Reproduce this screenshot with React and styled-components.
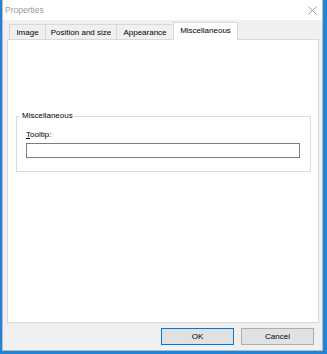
import React from 'react';
import styled, { createGlobalStyle } from 'styled-components';

const GlobalStyle = createGlobalStyle`
  html, body {
    margin: 0;
    padding: 0;
  }
  body {
    width: 327px;
    height: 354px;
    overflow: hidden;
    background: #1e85da;
    font-family: "Liberation Sans", Arial, sans-serif;
    font-size: 8px;
    color: #000;
  }
`;

const Window = styled.div`
  box-sizing: border-box;
  margin-left: 2px;
  width: 321px;
  height: 351px;
  border: 1px solid #bcbcbc;
  border-top: none;
  background: #f0f0f0;
  display: flex;
  flex-direction: column;
`;

const TitleBar = styled.div`
  height: 20px;
  flex: none;
  background: #fff;
  display: flex;
  align-items: center;
  justify-content: space-between;
  padding: 0 5px 0 2px;
  color: #9a9a9a;
  font-size: 8.5px;
`;

const Body = styled.div`
  flex: 1;
  display: flex;
  flex-direction: column;
  padding: 2px 3px 0 4px;
`;

const TabStrip = styled.div`
  height: 17px;
  flex: none;
  display: flex;
  align-items: flex-end;
  padding-left: 2px;
  position: relative;
  z-index: 1;
`;

const Tab = styled.div`
  box-sizing: border-box;
  width: ${(p) => p.$w}px;
  height: ${(p) => (p.$active ? 18 : 15)}px;
  margin-bottom: ${(p) => (p.$active ? -1 : 0)}px;
  margin-left: ${(p) => (p.$first ? 0 : -1)}px;
  border: 1px solid #d9d9d9;
  border-bottom: none;
  background: ${(p) => (p.$active ? '#fff' : '#f0f0f0')};
  display: flex;
  justify-content: center;
  align-items: flex-start;
  padding-top: ${(p) => (p.$active ? 3 : 3)}px;
  line-height: 10px;
  white-space: nowrap;
  position: relative;
  z-index: ${(p) => (p.$active ? 2 : 1)};
`;

const Panel = styled.div`
  box-sizing: border-box;
  flex: 1;
  background: #fff;
  border: 1px solid #d9d9d9;
  padding: 71px 7px 0 8px;
`;

const Group = styled.fieldset`
  margin: 0;
  border: 1px solid #dcdcdc;
  padding: 9px 10px 13px 9px;
  display: flex;
  flex-direction: column;
  gap: 3px;
`;

const Legend = styled.legend`
  padding: 0 2px;
  margin-left: -6px;
  line-height: 10px;
`;

const FieldLabel = styled.label`
  line-height: 10px;
`;

const TextBox = styled.input`
  box-sizing: border-box;
  width: 100%;
  height: 15px;
  margin: 0;
  border: 1px solid #7d7d7d;
  background: #fff;
  outline: none;
`;

const Footer = styled.div`
  flex: none;
  display: flex;
  justify-content: flex-end;
  gap: 7px;
  padding: 5px 5px 5px 0;
`;

const Button = styled.button`
  box-sizing: border-box;
  width: 73px;
  height: 17px;
  margin: 0;
  padding: 0;
  background: #e1e1e1;
  border: 1px solid ${(p) => (p.$default ? '#0078d7' : '#adadad')};
  font-family: inherit;
  font-size: 8px;
  color: #000;
`;

const tabs = [
  { label: 'Image', w: 37 },
  { label: 'Position and size', w: 72 },
  { label: 'Appearance', w: 58 },
  { label: 'Miscellaneous', w: 65, active: true },
];

export default function App() {
  return (
    <>
      <GlobalStyle />
      <Window>
        <TitleBar>
          <span>Properties</span>
          <svg width="9" height="9" viewBox="0 0 9 9">
            <path d="M0.5 0.5 L8.5 8.5 M8.5 0.5 L0.5 8.5" stroke="#a0a0a0" strokeWidth="1" />
          </svg>
        </TitleBar>
        <Body>
          <TabStrip>
            {tabs.map((t, i) => (
              <Tab key={t.label} $w={t.w} $active={t.active} $first={i === 0}>
                {t.label}
              </Tab>
            ))}
          </TabStrip>
          <Panel>
            <Group>
              <Legend>Miscellaneous</Legend>
              <FieldLabel htmlFor="tooltip">
                <u>T</u>ooltip:
              </FieldLabel>
              <TextBox id="tooltip" type="text" />
            </Group>
          </Panel>
          <Footer>
            <Button $default>OK</Button>
            <Button>Cancel</Button>
          </Footer>
        </Body>
      </Window>
    </>
  );
}
